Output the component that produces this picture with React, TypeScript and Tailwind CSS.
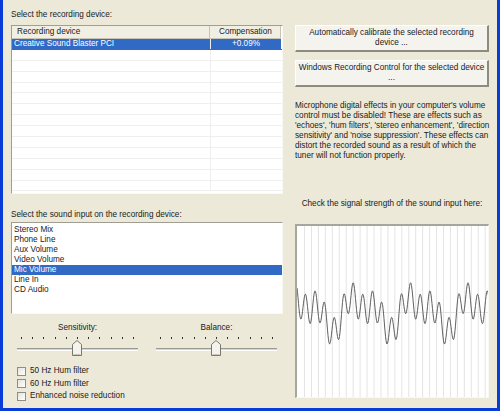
import React from 'react';

const inputs = ['Stereo Mix', 'Phone Line', 'Aux Volume', 'Video Volume', 'Mic Volume', 'Line In', 'CD Audio'];

const paragraph = [
  "Microphone digital effects in your computer's volume",
  'control must be disabled! These are effects such as',
  "'echoes', 'hum filters', 'stereo enhancement', 'direction",
  "sensitivity' and 'noise suppression'. These effects can",
  'distort the recorded sound as a result of which the',
  'tuner will not function properly.',
];

// Build the signal trace (sum of a few sines)
const wavePath = () => {
  const pts: string[] = [];
  const p = 18;
  for (let x = 0; x <= 192; x += 0.5) {
    const f =
      12 * Math.cos((2 * Math.PI * (x - p)) / 9.57) +
      7 * Math.cos((2 * Math.PI * (x - p - 4.8)) / 28.7) +
      10 * Math.sin((2 * Math.PI * (x - 48)) / 57.4);
    const y = 86 - f * 1.25;
    pts.push(`${x === 0 ? 'M' : 'L'}${x.toFixed(1)} ${y.toFixed(2)}`);
  }
  return pts.join(' ');
};

const XpButton = ({ lines }: { lines: string[] }) => (
  <div className="h-[27px] flex flex-col items-center justify-center bg-[#F4F3EE] border-t border-l border-t-white border-l-white border-b-2 border-r-2 border-b-[#8E8B7E] border-r-[#8E8B7E] text-center">
    {lines.map((l, i) => (
      <span key={i} className="whitespace-nowrap leading-[10.5px]">{l}</span>
    ))}
  </div>
);

const Thumb = () => (
  <svg width="10" height="16" viewBox="0 0 10 16">
    <path d="M0.5 4.5 L5 0.5 L9.5 4.5 L9.5 15.5 L0.5 15.5 Z" fill="#F4F3EE" stroke="#7A786E" />
    <path d="M1.5 14.5 L8.5 14.5" stroke="#C9C7BA" />
  </svg>
);

const Slider = ({ label }: { label: string }) => (
  <div className="w-[121px] flex flex-col">
    <div className="text-center h-[10px]">{label}</div>
    <div className="mt-[4px] h-[2px] relative">
      {Array.from({ length: 11 }).map((_, i) => (
        <span
          key={i}
          className="absolute top-0 w-px h-[2px] bg-[#333]"
          style={{ left: 4 + i * 11.2 }}
        />
      ))}
    </div>
    <div className="relative h-[18px]">
      <div className="absolute left-0 right-0 top-[9px] h-[3px] border-t border-t-[#9D9B90] border-b border-b-white bg-[#D8D5C6]" />
      <div className="absolute top-[1px] left-[55px]">
        <Thumb />
      </div>
    </div>
  </div>
);

const Check = ({ label }: { label: string }) => (
  <div className="h-[12.5px] flex items-center gap-[4px]">
    <span className="w-[9px] h-[9px] border border-[#8F8E86] bg-gradient-to-br from-[#E4E3DC] to-white" />
    <span>{label}</span>
  </div>
);

export default function App() {
  const rows = Array.from({ length: 14 });
  return (
    <div className="w-[500px] h-[411px] bg-[#ECE9D8] border-l-[3px] border-r-[3px] border-b-[3px] border-[#0A3DD8] flex font-['Liberation_Sans',Arial,sans-serif] text-[8.2px] leading-[10px] text-[#1a1a1a] overflow-hidden">
      {/* left column */}
      <div className="w-[272px] ml-[8px] pt-[10px] flex flex-col">
        <div className="h-[10px]">Select the recording device:</div>
        <div className="mt-[5px] h-[169px] bg-white border-t border-l border-t-[#A09E94] border-l-[#A09E94] border-b border-r border-b-[#F8F8F4] border-r-[#F8F8F4] overflow-hidden">
          <div className="flex h-[13px] bg-[#F1EFE4] border-b border-b-[#C7C4B6] w-[269px]">
            <div className="w-[198px] pl-[5px] flex items-center border-r border-r-[#C7C4B6]">Recording device</div>
            <div className="flex-1 pl-[9px] flex items-center border-r border-r-[#C7C4B6]">Compensation</div>
          </div>
          {rows.map((_, i) => (
            <div key={i} className={`flex h-[10.9px] border-b ${i === 0 ? 'border-b-[#316AC5]' : 'border-b-[#EFEFEF]'}`}>
              <div className={`w-[198px] pl-[2px] flex items-center ${i === 0 ? 'bg-[#316AC5] text-white' : ''}`}>
                {i === 0 ? 'Creative Sound Blaster PCI' : ''}
              </div>
              <div className="w-px bg-[#EFEFEF]" />
              <div className={`w-[70px] flex items-center justify-center ${i === 0 ? 'bg-[#316AC5] text-white' : ''}`}>
                {i === 0 ? '+0.09%' : ''}
              </div>
            </div>
          ))}
        </div>

        <div className="mt-[16px] h-[10px]">Select the sound input on the recording device:</div>
        <div className="mt-[2px] h-[92px] bg-white border-t border-l border-t-[#A09E94] border-l-[#A09E94] border-b border-r border-b-[#F8F8F4] border-r-[#F8F8F4] pt-[2px]">
          {inputs.map((s) => (
            <div key={s} className={`h-[10px] pl-[2px] ${s === 'Mic Volume' ? 'bg-[#316AC5] text-white' : ''}`}>
              {s}
            </div>
          ))}
        </div>

        <div className="mt-[9px] pl-[6px] flex gap-[18px]">
          <Slider label="Sensitivity:" />
          <Slider label="Balance:" />
        </div>

        <div className="mt-[8px] pl-[6px] flex flex-col">
          <Check label="50 Hz Hum filter" />
          <Check label="60 Hz Hum filter" />
          <Check label="Enhanced noise reduction" />
        </div>
      </div>

      {/* right column */}
      <div className="w-[194px] ml-[12px] pt-[25px] flex flex-col">
        <XpButton lines={['Automatically calibrate the selected recording', 'device ...']} />
        <div className="mt-[8px]">
          <XpButton lines={['Windows Recording Control for the selected device', '...']} />
        </div>
        <div className="mt-[14px] flex flex-col">
          {paragraph.map((l, i) => (
            <span key={i} className="whitespace-nowrap h-[10px]">{l}</span>
          ))}
        </div>
        <div className="mt-[38px] h-[10px] text-center whitespace-nowrap">Check the signal strength of the sound input here:</div>
        <div className="mt-[15px] h-[174px] bg-white border-t-2 border-l-2 border-t-[#A8A69C] border-l-[#A8A69C] border-b border-r border-b-[#F8F8F4] border-r-[#F8F8F4] overflow-hidden">
          <svg width="192" height="172" viewBox="0 0 192 172">
            {Array.from({ length: 27 }).map((_, i) => (
              <line key={i} x1={7.5 + i * 6.95} y1="0" x2={7.5 + i * 6.95} y2="172" stroke="#E4E4E4" strokeWidth="1" />
            ))}
            <line x1="0" y1="86.5" x2="192" y2="86.5" stroke="#E4E4E4" strokeWidth="1" />
            <path d={wavePath()} fill="none" stroke="#606060" strokeWidth="1" />
          </svg>
        </div>
      </div>
    </div>
  );
}
